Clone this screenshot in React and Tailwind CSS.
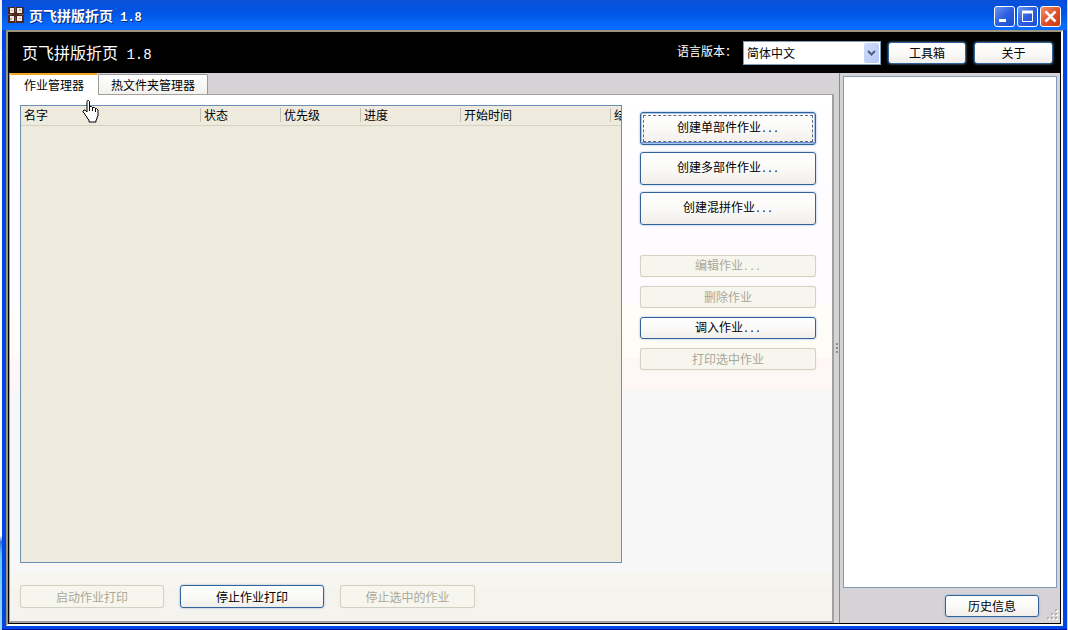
import React, { useState } from 'react';
import clsx from 'clsx';

const COLUMNS = [
    { title: '名字', width: 'w-[179px]' },
    { title: '状态', width: 'w-[80px]' },
    { title: '优先级', width: 'w-[80px]' },
    { title: '进度', width: 'w-[100px]' },
    { title: '开始时间', width: 'w-[150px]' },
    { title: '结', width: 'w-auto' },
];

const Dots = () => <span className="font-['Liberation_Mono',monospace] text-[10px]">...</span>;

const Button = ({ children, className, disabled, focused, dots }) => (
    <button
        disabled={disabled}
        className={clsx(
            'relative shrink-0 rounded-[3px] border text-center whitespace-nowrap',
            disabled
                ? 'border-[#d3d1c2] bg-[#f6f6ee] text-[#aaa899] shadow-[0_0_1px_#d3d1c2]'
                : 'border-[#2f639c] bg-linear-to-b from-white via-[#fbfaf8] to-[#f1eeea] text-black',
            !disabled && !focused && 'shadow-[0_0_2px_#7fa3cc]',
            focused && 'shadow-[0_0_2px_#7fa3cc,inset_0_0_0_1px_#a9c4ea,inset_0_-2px_0_#5b8fd6]',
            className
        )}
    >
        {focused && <span className="absolute inset-0.5 border border-dashed border-[#666677]" />}
        {children}
        {dots && <Dots />}
    </button>
);

const WindowButton = ({ label, close, children }) => (
    <button
        aria-label={label}
        className={clsx(
            'flex size-[21px] items-center justify-center rounded-[3px] border border-white',
            close
                ? 'bg-linear-to-br from-[#f0906f] via-[#e2512b] to-[#c53a12]'
                : 'bg-linear-to-br from-[#6d95f0] via-[#2c5fe0] to-[#1c4fd0]'
        )}
    >
        <svg width="19" height="19" viewBox="0 0 19 19" fill="none" stroke="#fff">{children}</svg>
    </button>
);

const AppIcon = () => (
    <svg width="16" height="16" viewBox="0 0 16 16" shapeRendering="crispEdges">
        <rect width="16" height="16" fill="#4a261b" />
        <path d="M2 1h4v5H2zM9 1h5v5H9zM2 9h4v5H2zM9 9h5v5H9z" fill="#f0eceb" />
        <path d="M3 3h2v1H3zM11 2h2v2h-2zM2 11h2v2H2zM11 11h2v1h-2z" fill="#b9adad" />
        <path d="M7 0h1v5H7zM7 10h1v6H7zM0 7h4v1H0zM11 7h5v1h-5z" fill="#7d5a50" />
    </svg>
);

const HandCursor = () => (
    <svg className="pointer-events-none absolute top-[27px] left-[71px]" width="18" height="23" viewBox="0 0 18 23">
        <path
            d="M6.500 0.500h1l1 1v5h2l1 1h2l1 1h1l1.500 1.500v6l-1 1v2l-1 1v2h-7v-2l-2-2v-1l-2-2v-1l-2-2v-1l1-1h1l2 2V1.500z"
            fill="#fff"
            stroke="#000"
        />
        <path d="M8.500 6v5M11.500 7.500V11M14.500 8.500V12" stroke="#000" />
    </svg>
);

const TitleBar = () => (
    <header className="flex h-[30px] shrink-0 items-center rounded-t-[6px] bg-linear-to-b from-[#0a50d8] from-0% via-[#0054e3] via-40% to-[#0a6bff] to-90% px-1.5">
        <AppIcon />
        <h1 className="mt-0.5 ml-[5px] flex-1 text-[14px] leading-4 font-bold whitespace-pre text-white [text-shadow:1px_1px_#0a2a7a]">
            页飞拼版折页<span className="font-['Liberation_Mono',monospace] text-[12px]"> 1.8</span>
        </h1>
        <div className="flex gap-0.5 pt-0.5">
            <WindowButton label="最小化"><path d="M4 13.5h7" strokeWidth="3" /></WindowButton>
            <WindowButton label="最大化"><path d="M4.5 5v9.500h10V5" /><path d="M4 5h11" strokeWidth="3" /></WindowButton>
            <WindowButton label="关闭" close><path d="M4.500 4.500l10 10M14.500 4.500l-10 10" strokeWidth="2.500" /></WindowButton>
        </div>
    </header>
);

const Banner = () => (
    <div className="flex h-[41px] shrink-0 items-center bg-black pr-2 pl-3.5 text-white">
        <div className="mt-0.5 flex-1 text-[16px] leading-5 whitespace-pre">
            页飞拼版折页<span className="font-['Liberation_Mono',monospace] text-[14px]"> 1.8</span>
        </div>
        <label htmlFor="lang" className="mr-1.5 pb-1">语言版本：</label>
        <div className="relative mr-[7px]">
            <select id="lang" className="block h-6 w-[138px] appearance-none border border-[#7f9db9] bg-white pl-[3px] text-[12px] leading-4 text-black">
                <option>简体中文</option>
                <option>English</option>
            </select>
            <span className="pointer-events-none absolute top-0.5 right-0.5 flex h-5 w-[15px] items-center justify-center rounded-[2px] bg-linear-to-br from-[#d0defc] to-[#b4c8f6]">
                <svg width="9" height="6" viewBox="0 0 9 6" fill="none" stroke="#4d6185" strokeWidth="2">
                    <path d="M1 1l3.500 3.500L8 1" />
                </svg>
            </span>
        </div>
        <Button className="mr-2 h-[22px] w-[78px]">工具箱</Button>
        <Button className="h-[22px] w-[79px]">关于</Button>
    </div>
);

const JobTable = () => (
    <div className="min-w-0 flex-1 overflow-hidden border border-[#6a8fb5] bg-[#eeebde]">
        <table className="w-full table-fixed border-collapse">
            <thead>
                <tr className="h-[19px] border-b border-[#d6d2c2]">
                    {COLUMNS.map((col, i) => (
                        <th key={col.title} className={clsx('overflow-hidden p-0 text-left font-normal whitespace-nowrap', col.width)}>
                            <span className={clsx('block h-3.5 leading-3.5', i === 0 ? 'pl-[3px]' : 'border-l border-[#c5c1b2] pl-[3px]')}>
                                {col.title}
                            </span>
                        </th>
                    ))}
                </tr>
            </thead>
        </table>
    </div>
);

const JobPanel = () => (
    <div className="flex min-h-0 flex-1 flex-col border-t border-r-2 border-b-2 border-[#a3a19f] bg-[linear-gradient(#fff_0%,#fefcff_20%,#fefcff_40%,#fffdf8_40%,#fffcf8_50%,#fff6f6_50%,#fff6f6_56%,#f7f7f7_56%,#f7f7f7_91%,#f7f6ee_91%,#f7f6ee_94%,#f5f3ee_94%)] pt-2.5 pl-2.5">
        <div className="flex min-h-0 flex-1 gap-[18px] pr-4">
            <JobTable />
            <div className="flex w-[176px] flex-col pt-[7px]">
                <div className="flex flex-col gap-[7px]">
                    <Button className="h-[33px]" focused dots>创建单部件作业</Button>
                    <Button className="h-[33px]" dots>创建多部件作业</Button>
                    <Button className="h-[33px]" dots>创建混拼作业</Button>
                </div>
                <div className="mt-[30px] flex flex-col gap-[9px]">
                    <Button className="h-[22px]" disabled dots>编辑作业</Button>
                    <Button className="h-[22px]" disabled>删除作业</Button>
                    <Button className="h-[22px]" dots>调入作业</Button>
                    <Button className="h-[22px]" disabled>打印选中作业</Button>
                </div>
            </div>
        </div>
        <div className="flex gap-4 pt-[22px] pb-[13px]">
            <Button className="h-[23px] w-[144px]" disabled>启动作业打印</Button>
            <Button className="h-[23px] w-[144px]">停止作业打印</Button>
            <Button className="h-[23px] w-[135px]" disabled>停止选中的作业</Button>
        </div>
    </div>
);

const Tabs = ({ active, onChange }) => (
    <div role="tablist" className="flex h-[21px] shrink-0 items-end">
        {['作业管理器', '热文件夹管理器'].map((name, i) => (
            <button
                key={name}
                role="tab"
                aria-selected={active === i}
                onClick={() => onChange(i)}
                className={clsx(
                    'leading-4',
                    i === 0 ? 'w-[88px]' : 'w-[110px]',
                    active === i
                        ? 'relative -mb-px h-[22px] rounded-t-[2px] border-t-2 border-[#f5a623] bg-white'
                        : 'h-5 rounded-t-[2px] border border-b-0 border-[#9a999b] bg-linear-to-b from-white to-[#f3f1ec]'
                )}
            >
                {name}
            </button>
        ))}
    </div>
);

const Sidebar = () => (
    <aside className="flex w-[217px] shrink-0 flex-col pt-[3px] pr-[3px]">
        <textarea aria-label="历史信息" readOnly className="block w-full flex-1 resize-none border border-[#7f9db9] bg-white outline-none" />
        <div className="flex h-[35px] items-center justify-end">
            <Button className="mr-2 h-[22px] w-[94px]">历史信息</Button>
            <svg className="-mr-0.5 self-end" width="12" height="14" viewBox="0 0 12 14" shapeRendering="crispEdges">
                <path d="M9 1h2v2H9zM5 5h2v2H5zM9 5h2v2H9zM1 9h2v2H1zM5 9h2v2H5zM9 9h2v2H9z" fill="#fff" />
                <path d="M8 0h2v2H8zM4 4h2v2H4zM8 4h2v2H8zM0 8h2v2H0zM4 8h2v2H4zM8 8h2v2H8z" fill="#b3afa8" />
            </svg>
        </div>
    </aside>
);

const Splitter = () => (
    <div className="flex w-[6px] shrink-0 flex-col items-center justify-center gap-0.5 border-r border-[#8c8a8f] bg-[#d6d3d6]">
        <span className="size-0.5 bg-[#8c8a8f]" />
        <span className="size-0.5 bg-[#8c8a8f]" />
        <span className="size-0.5 bg-[#8c8a8f]" />
    </div>
);

// slivers of the windows that lie behind this one
const Backdrop = () => (
    <div className="w-0.5 shrink-0 bg-[linear-gradient(#f4f2e8_0%,#f4f2e8_8%,#fff_8%,#fff_85%,#3a6fe0_86%,#5cc8f5_88%,#9fd8f5_100%)]" />
);

const App = () => {
    const [tab, setTab] = useState(0);

    return (
        <div className="flex h-screen overflow-hidden bg-[#0a1f7a] font-['Noto_Sans_CJK_SC',sans-serif] text-[12px] leading-4 text-black">
            <Backdrop />
            <div className="flex min-w-0 flex-1 flex-col border-b border-[#0010a0] bg-[#0046e5]">
                <TitleBar />
                <div className="mx-1 mb-[3px] flex min-h-0 flex-1 flex-col border-2 border-t-[#9c9580] border-r-white border-b-white border-l-[#9c9580]">
                    <Banner />
                    <div className="flex min-h-0 flex-1 border border-t-0 border-black bg-[#d6d3d6]">
                        <main className="relative flex min-w-0 flex-1 flex-col border-l border-[#a3a19f]">
                            <Tabs active={tab} onChange={setTab} />
                            <JobPanel />
                            <HandCursor />
                        </main>
                        <Splitter />
                        <div className="w-[3px] shrink-0" />
                        <Sidebar />
                    </div>
                </div>
            </div>
            <div className="w-px shrink-0 bg-[#c9d4f0]" />
        </div>
    );
};

export default App;
